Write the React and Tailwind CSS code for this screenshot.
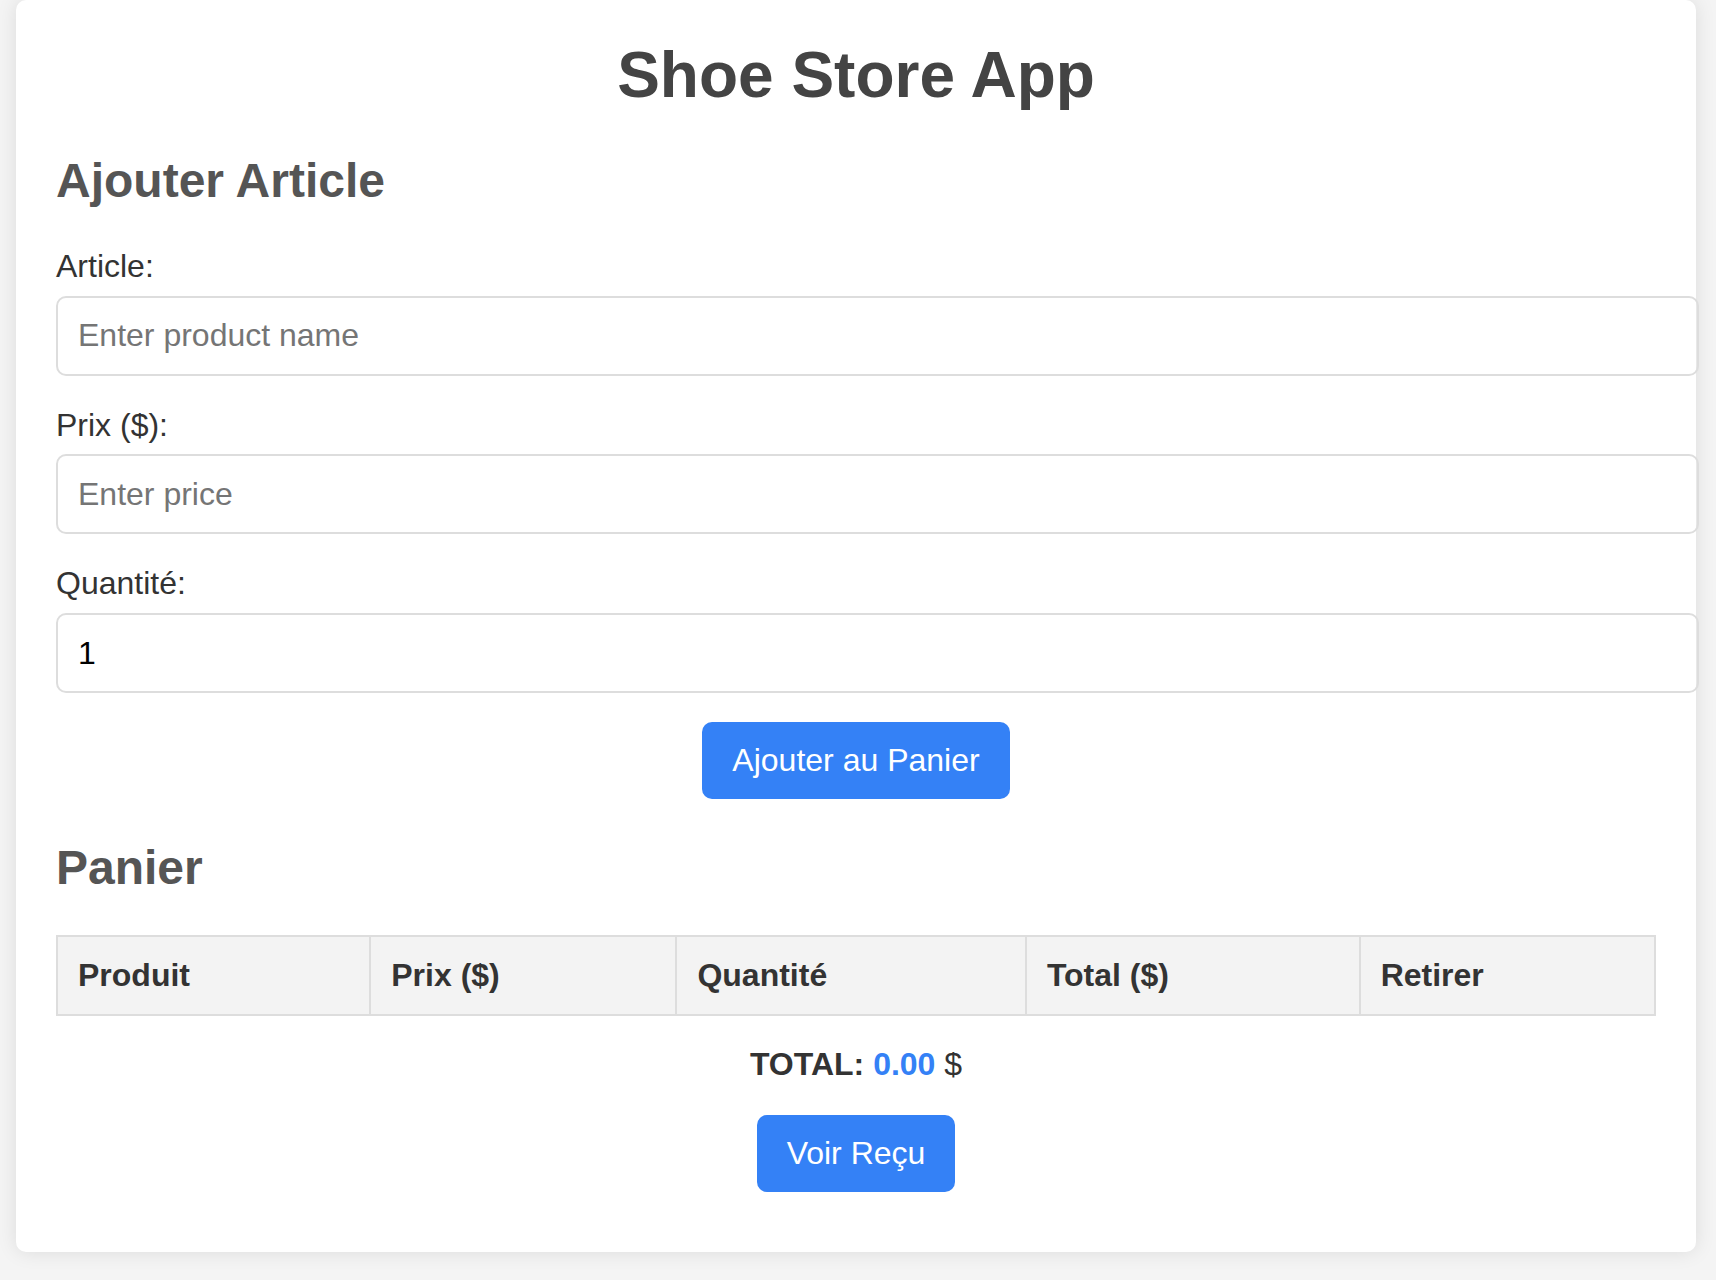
import React from "react";

export default function App() {
  return (
    <div className="min-h-screen bg-[#f4f4f4] font-['Liberation_Sans',Arial,sans-serif] text-[#333]">
      <div className="ml-[16px] w-[1680px] rounded-[10px] bg-white px-[40px] pt-[39px] pb-[60px] shadow-[0_0_20px_rgba(0,0,0,0.1)]">
        <h1 className="text-center text-[64px] font-bold leading-[1.15] text-[#444]">Shoe Store App</h1>
        <h2 className="mt-[40px] text-[48px] font-bold leading-[1.15] text-[#555]">Ajouter Article</h2>

        <div className="mt-[40px]">
          <label className="block text-[32px] leading-[1.15] text-[#333]">Article:</label>
          <input
            type="text"
            placeholder="Enter product name"
            className="mt-[11px] block h-[80px] w-[1643px] rounded-[10px] border-2 border-[#ddd] px-[20px] text-[32px] text-black placeholder:text-[#757575] outline-none"
          />
          <label className="mt-[31px] block text-[32px] leading-[1.15] text-[#333]">Prix ($):</label>
          <input
            type="text"
            placeholder="Enter price"
            className="mt-[11px] block h-[80px] w-[1643px] rounded-[10px] border-2 border-[#ddd] px-[20px] text-[32px] text-black placeholder:text-[#757575] outline-none"
          />
          <label className="mt-[31px] block text-[32px] leading-[1.15] text-[#333]">Quantité:</label>
          <input
            type="text"
            defaultValue="1"
            className="mt-[11px] block h-[80px] w-[1643px] rounded-[10px] border-2 border-[#ddd] px-[20px] text-[32px] text-black outline-none"
          />
        </div>

        <div className="mt-[29px] flex justify-center">
          <button className="rounded-[10px] bg-[#3481f6] px-[30px] py-[20px] text-[32px] leading-[1.15] text-white">
            Ajouter au Panier
          </button>
        </div>

        <h2 className="mt-[41px] text-[48px] font-bold leading-[1.15] text-[#555]">Panier</h2>

        <table className="mt-[40px] w-full border-collapse">
          <thead>
            <tr>
              {["Produit", "Prix ($)", "Quantité", "Total ($)", "Retirer"].map((h) => (
                <th
                  key={h}
                  className="border-2 border-[#ddd] bg-[#f3f3f3] p-[20px] text-left text-[32px] font-bold leading-[1.15] text-[#333]"
                >
                  {h}
                </th>
              ))}
            </tr>
          </thead>
          <tbody></tbody>
        </table>

        <p className="mt-[30px] mb-[32px] text-center text-[32px] leading-[1.15] text-[#333]">
          <span className="font-bold">TOTAL: </span>
          <span className="font-bold text-[#3481f6]">0.00</span> $
        </p>

        <div className="flex justify-center">
          <button className="rounded-[10px] bg-[#3481f6] px-[30px] py-[20px] text-[32px] leading-[1.15] text-white">
            Voir Reçu
          </button>
        </div>
      </div>
    </div>
  );
}
